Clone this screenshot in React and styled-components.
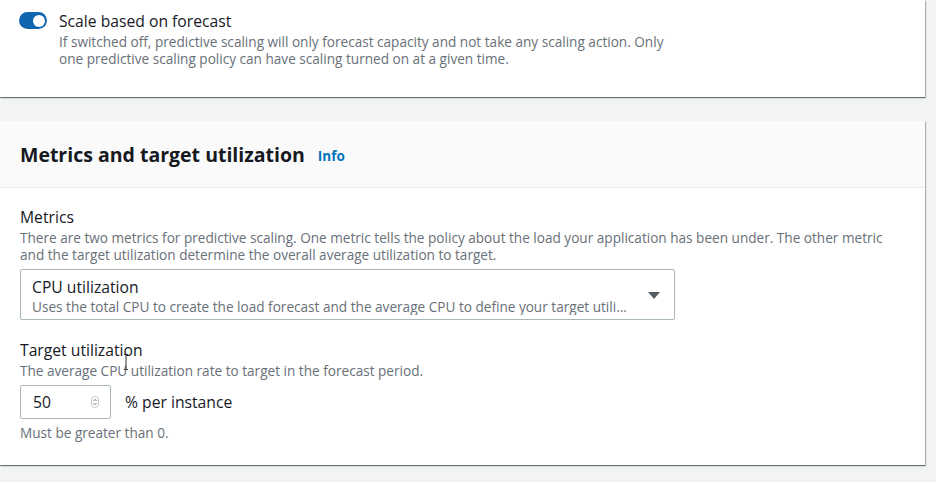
import React, { useState } from "react";
import styled, { createGlobalStyle } from "styled-components";

const GlobalStyle = createGlobalStyle`
  html, body {
    margin: 0;
    padding: 0;
    background: #f2f3f3;
    font-family: "Open Sans", "Noto Sans", sans-serif;
    color: #16191f;
  }
`;

const Page = styled.div`
  width: 925px;
  padding-bottom: 16px;
  display: flex;
  flex-direction: column;
  gap: 24px;
`;

const Card = styled.div`
  background: #fff;
  box-shadow: 0 1px 1px 0 rgba(0, 28, 36, 0.45), 1px 1px 1px 0 rgba(0, 28, 36, 0.25);
`;

const ToggleBody = styled.div`
  padding: 9px 20px 30px 19px;
  display: flex;
  gap: 12px;
  align-items: flex-start;
`;

const Switch = styled.button`
  flex: none;
  margin-top: 3px;
  width: 28px;
  height: 17px;
  border: none;
  padding: 0;
  border-radius: 9px;
  background: ${(p) => (p.$on ? "#1166b0" : "#879596")};
  position: relative;
  cursor: pointer;

  &::after {
    content: "";
    position: absolute;
    top: 2.5px;
    left: ${(p) => (p.$on ? "13.5px" : "2.5px")};
    width: 12px;
    height: 12px;
    border-radius: 50%;
    background: #fff;
  }
`;

const Label = styled.div`
  font-size: 15.7px;
  line-height: 24px;
  color: #16191f;
`;

const Description = styled.div`
  font-size: 13.6px;
  line-height: 17px;
  color: #687078;
`;

const Header = styled.div`
  background: #fafafa;
  border-bottom: 1px solid #eaeded;
  height: 66px;
  padding: 0 20px;
  display: flex;
  align-items: center;
  gap: 13px;
`;

const Title = styled.h2`
  margin: 0;
  font-size: 19.5px;
  font-weight: 700;
  color: #16191f;
`;

const InfoLink = styled.a`
  font-size: 13.5px;
  font-weight: 700;
  color: #0073bb;
  text-decoration: none;
  margin-top: 4px;
`;

const Body = styled.div`
  padding: 17px 20px 24px;
  display: flex;
  flex-direction: column;
  gap: 18px;
`;

const Field = styled.div`
  position: relative;
  display: flex;
  flex-direction: column;
`;

const Select = styled.div`
  margin-top: 6px;
  width: 655px;
  box-sizing: border-box;
  border: 1px solid #aab7b8;
  border-radius: 2px;
  padding: 6px 14px 4px 11px;
  display: flex;
  align-items: center;
  gap: 17px;
`;

const SelectText = styled.div`
  flex: 1;
  min-width: 0;
`;

const Option = styled.div`
  font-size: 15.7px;
  line-height: 22px;
`;

const OptionDesc = styled(Description)`
  white-space: nowrap;
  overflow: hidden;
  text-overflow: ellipsis;
`;

const Caret = styled.svg`
  flex: none;
`;

const InputRow = styled.div`
  margin-top: 6px;
  display: flex;
  align-items: center;
  gap: 14px;
`;

const NumberBox = styled.div`
  width: 91px;
  height: 34px;
  box-sizing: border-box;
  border: 1px solid #aab7b8;
  border-radius: 2px;
  padding: 0 11px 0 12px;
  display: flex;
  align-items: center;
  justify-content: space-between;
  font-size: 15.7px;
`;

const Unit = styled.span`
  font-size: 15.7px;
`;

const Constraint = styled(Description)`
  margin-top: 5px;
`;

const Cursor = styled.svg`
  position: absolute;
  left: 103px;
  top: 16px;
`;

export default function App() {
  const [on, setOn] = useState(true);
  return (
    <>
      <GlobalStyle />
      <Page>
        <Card>
          <ToggleBody>
            <Switch $on={on} onClick={() => setOn(!on)} aria-label="Scale based on forecast" />
            <div>
              <Label>Scale based on forecast</Label>
              <Description>
                If switched off, predictive scaling will only forecast capacity and not take any scaling action. Only
                <br />
                one predictive scaling policy can have scaling turned on at a given time.
              </Description>
            </div>
          </ToggleBody>
        </Card>
        <Card>
          <Header>
            <Title>Metrics and target utilization</Title>
            <InfoLink href="#">Info</InfoLink>
          </Header>
          <Body>
            <Field>
              <Label>Metrics</Label>
              <Description>
                There are two metrics for predictive scaling. One metric tells the policy about the load your application has been under. The other metric
                <br />
                and the target utilization determine the overall average utilization to target.
              </Description>
              <Select>
                <SelectText>
                  <Option>CPU utilization</Option>
                  <OptionDesc>
                    Uses the total CPU to create the load forecast and the average CPU to define your target utilization.
                  </OptionDesc>
                </SelectText>
                <Caret width="12" height="7" viewBox="0 0 12 7">
                  <path d="M0 0h12L6 7z" fill="#545b64" />
                </Caret>
              </Select>
            </Field>
            <Field>
              <Label>Target utilization</Label>
              <Description>The average CPU utilization rate to target in the forecast period.</Description>
              <InputRow>
                <NumberBox>
                  <span>50</span>
                  <svg width="8" height="12" viewBox="0 0 8 12">
                    <rect x="0.5" y="0.5" width="7" height="11" rx="3.5" fill="none" stroke="#c6cdce" />
                    <path d="M2.5 5L4 3.3 5.5 5M2.5 7L4 8.7 5.5 7" fill="none" stroke="#687078" strokeWidth="0.9" />
                  </svg>
                </NumberBox>
                <Unit>% per instance</Unit>
              </InputRow>
              <Constraint>Must be greater than 0.</Constraint>
              <Cursor width="6" height="16" viewBox="0 0 6 16">
                <path d="M1 0.5h1.5L3 1l0.5-0.5H5M3 1v14M1 15.5h1.5L3 15l0.5 0.5H5" fill="none" stroke="#16191f" strokeWidth="0.9" />
              </Cursor>
            </Field>
          </Body>
        </Card>
      </Page>
    </>
  );
}
